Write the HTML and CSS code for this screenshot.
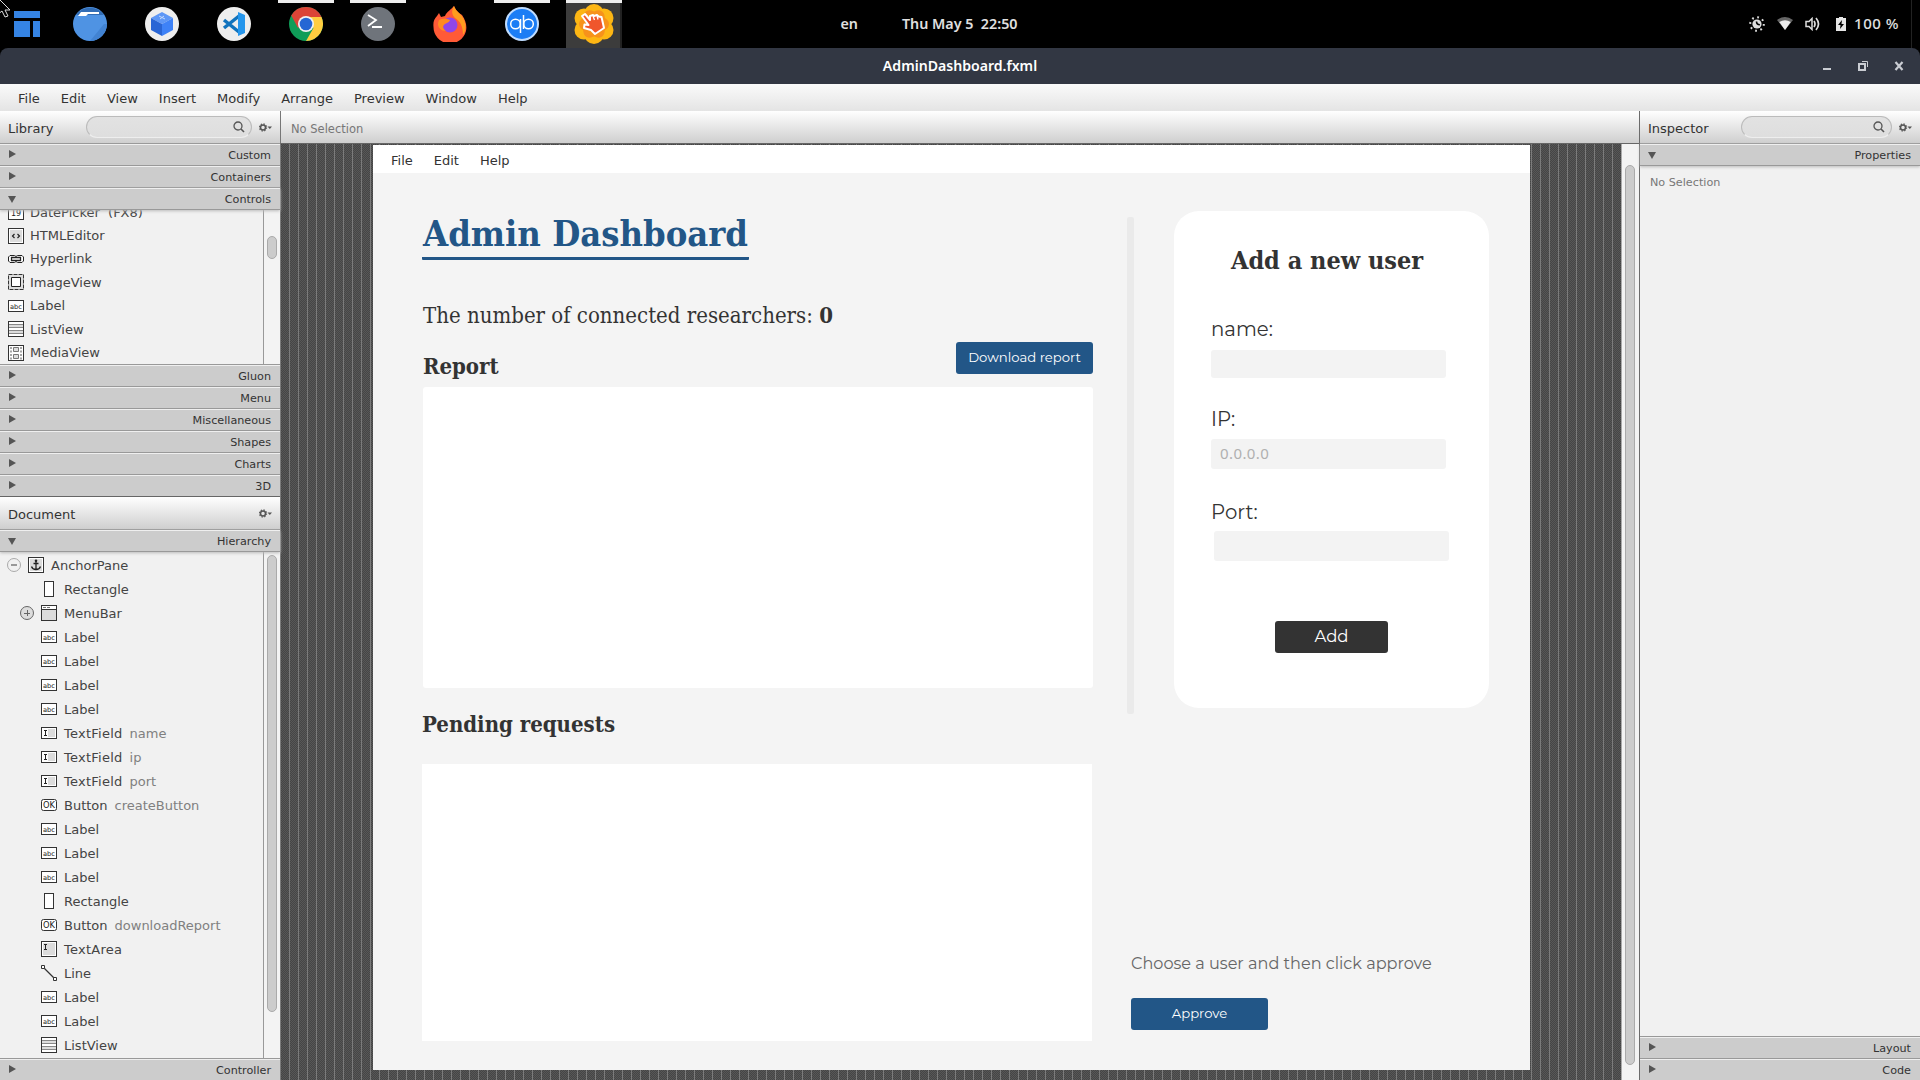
FILE: index.html
```html
<!DOCTYPE html>
<html lang="en">
<head>
<meta charset="utf-8">
<title>AdminDashboard.fxml</title>
<link rel="stylesheet" href="styles.css">
</head>
<body>
<svg class="defs" width="0" height="0">
  <symbol id="label" viewBox="0 0 16 16"><rect x=".5" y="2.5" width="15" height="11" fill="#fff" stroke="#333"/><text x="2" y="10.800" font-size="6.500" fill="#222" font-family="DejaVu Sans" textLength="12" lengthAdjust="spacingAndGlyphs">abc</text></symbol>
  <symbol id="textfield" viewBox="0 0 16 16"><rect x=".5" y="2.5" width="15" height="11" fill="#fff" stroke="#333"/><path fill="#dcdcdc" d="M7 4h7v8H7z"/><path d="M3 5.500h3M3 10.500h3M4.500 5v6" stroke="#222" fill="none"/></symbol>
  <symbol id="textarea" viewBox="0 0 16 16"><rect x=".5" y=".5" width="15" height="15" fill="#fff" stroke="#333"/><path fill="#dcdcdc" d="M2 2h12v12H2z"/><path d="M3 3.500h3M3 8.500h3M4.500 3v6" stroke="#222" fill="none"/></symbol>
  <symbol id="button" viewBox="0 0 16 16"><rect x=".5" y="2.500" width="15" height="11" rx="2" fill="#fff" stroke="#333"/><text x="2" y="11" font-size="8" fill="#222" font-family="DejaVu Sans" textLength="12" lengthAdjust="spacingAndGlyphs">OK</text></symbol>
  <symbol id="rect" viewBox="0 0 16 16"><rect x="3.500" y=".5" width="9" height="15" fill="#fff" stroke="#333"/></symbol>
  <symbol id="menubar" viewBox="0 0 16 16"><rect x=".5" y=".5" width="15" height="15" fill="#dcdcdc" stroke="#333"/><path fill="#fff" d="M1 1h14v3H1z"/><path d="M0 4.500h16" stroke="#333"/><path d="M2 2.500h3M6 2.500h3" stroke="#777"/></symbol>
  <symbol id="listview" viewBox="0 0 16 16"><rect x=".5" y=".5" width="15" height="15" fill="#fff" stroke="#333"/><path fill="#dcdcdc" d="M1 3h14v3H1zM1 9h14v3H1z"/><path d="M1 3.500h14M1 6.500h14M1 9.500h14M1 12.500h14" stroke="#888"/></symbol>
  <symbol id="line" viewBox="0 0 16 16"><path d="M3 3l10 10" stroke="#333" stroke-width="1.200"/><path d="M.5.5h3v3h-3zM12.500 12.500h3v3h-3z" fill="#fff" stroke="#333"/></symbol>
  <symbol id="anchor" viewBox="0 0 16 16"><rect x=".5" y=".5" width="15" height="15" fill="#fff" stroke="#333"/><path fill="#dcdcdc" d="M2 2h12v12H2z"/><path d="M8 4v8.500M5.500 6.500h5M3.500 9.500c.7 2.200 2.300 3 4.500 3s3.800-.8 4.500-3" stroke="#222" stroke-width="1.300" fill="none"/><circle cx="8" cy="3.800" r="1.300" fill="#222"/></symbol>
  <symbol id="date" viewBox="0 0 16 16"><rect x=".5" y=".5" width="15" height="15" fill="#fff" stroke="#333"/><path d="M1 2.500h14" stroke="#999" stroke-width="3"/><text x="3" y="12" font-size="8" fill="#222" font-family="DejaVu Sans">19</text></symbol>
  <symbol id="html" viewBox="0 0 16 16"><rect x=".5" y=".5" width="15" height="15" fill="#fff" stroke="#333"/><path fill="#dcdcdc" d="M2 2h12v12H2z"/><path d="M6.500 6L4.500 8l2 2M9.500 6l2 2-2 2" stroke="#222" stroke-width="1.200" fill="none"/></symbol>
  <symbol id="link" viewBox="0 0 16 16"><path d="M2 4.500h4.500L8 5.500l1.500-1H14L15.500 6v4L14 11.500H9.500L8 10.500l-1.500 1H2L.5 10V6z" fill="#fff" stroke="#222"/><path d="M3.500 6.500h9v3h-9z" fill="#fff" stroke="#222" stroke-width="1.300"/></symbol>
  <symbol id="image" viewBox="0 0 16 16"><path d="M1 1h14v14H1z" fill="#ddd"/><path d="M.5.5h15v15H.5z" fill="none" stroke="#333" stroke-dasharray="4 1"/><path d="M3.500 3.500h9v9h-9z" fill="#fff" stroke="#222"/></symbol>
  <symbol id="media" viewBox="0 0 16 16"><rect x=".5" y=".5" width="15" height="15" fill="#fff" stroke="#333"/><path d="M3 2v13M13 2v13" stroke="#888" stroke-width="1.500" stroke-dasharray="2 1.500"/><path d="M5.500 2.500h5v4h-5zM5.500 9.500h5v4h-5z" fill="#ddd" stroke="#777"/></symbol>
  <symbol id="search" viewBox="0 0 12 12"><circle cx="5" cy="5" r="4" fill="none" stroke="#555" stroke-width="1.300"/><path d="M8 8l3 3" stroke="#555" stroke-width="1.600"/></symbol>
  <symbol id="gear" viewBox="0 0 13 9"><circle cx="4" cy="4.500" r="3.500" fill="none" stroke="#666" stroke-width="1.400" stroke-dasharray="1.400 1.350"/><circle cx="4" cy="4.500" r="2.500" fill="none" stroke="#555" stroke-width="1.500"/><path d="M8.500 3.500H13L10.800 6z" fill="#555"/></symbol>
</svg>

<header class="taskbar">
  <nav class="apps">
    <span class="app"><svg width="28" height="28" viewBox="0 0 28 28"><path fill="#3584e4" d="M1 1h26v7H1zM1 11h16v16H1zM20 11h7v16h-7z"/></svg></span>
    <span class="app"><svg width="34" height="34" viewBox="0 0 34 34"><circle cx="17" cy="17" r="17" fill="#4f93e3"/><path fill="#326db5" d="M3 8a17 17 0 0 1 28 0z"/><path fill="#fff" d="M8 5h18v2H15l-2 2H5z"/><path fill="#4283d2" d="M31 17L17 34a17 17 0 0 0 17-17z"/></svg></span>
    <span class="app"><svg width="34" height="34" viewBox="0 0 34 34"><circle cx="17" cy="17" r="17" fill="#eee"/><path fill="#5e97f6" d="M17 5l11 6-11 6-11-6z"/><path fill="#2a66d5" d="M6 11l11 6v12L6 23z"/><path fill="#3e82f7" d="M28 11l-11 6v12l11-6z"/><path d="M14 9l6 3M15 12l4-3" stroke="#c5dafc"/></svg></span>
    <span class="app"><svg width="34" height="34" viewBox="0 0 34 34"><circle cx="17" cy="17" r="17" fill="#eee"/><path d="M22 9L7 21M7 13l15 12" stroke="#1173bd" stroke-width="3.500" fill="none"/><path fill="#2596ec" d="M21 5l7 3v18l-7 3z"/></svg></span>
    <span class="app run"><svg width="34" height="34" viewBox="0 0 34 34"><circle cx="17" cy="17" r="17" fill="#0f9d58"/><path fill="#db4437" d="M2.300 8.500a17 17 0 0 1 30.200 1.500H17l-8 11z"/><path fill="#ffcd40" d="M32.500 10A17 17 0 0 1 17 34l7.500-13L17 10z"/><circle cx="17" cy="17" r="8" fill="#f1f1f1"/><circle cx="17" cy="17" r="6.300" fill="#2566d4"/></svg></span>
    <span class="app run"><svg width="34" height="34" viewBox="0 0 34 34"><circle cx="17" cy="17" r="17" fill="#6f747b"/><path d="M7 8l8 5-8 6M11 20h10" stroke="#fff" stroke-width="1.800" fill="none"/></svg></span>
    <span class="app"><svg width="34" height="36" viewBox="0 0 34 36"><path fill="#ff5a36" d="M4 10l2-3 2 4 4-1c2-5 6-6 9-10 1 3 3 5 5 7l3 2c4 6 5 11 4 16A16.500 16.500 0 0 1 .5 21C0 16 1 13 4 10z"/><path fill="#ff9d1e" d="M21 0c1 3 3 5 5 7 8 7 8 17 4 22 0-9-3-14-8-17-3-3-4-7-1-12z"/><circle cx="17" cy="19" r="7.500" fill="#9046e8"/><path fill="#ff8b20" d="M6 14c4-2 8-1 11 0-1 3-4 3-5 4-3 2-2 5 1 7-6 0-10-5-7-11z"/></svg></span>
    <span class="app run"><svg width="34" height="34" viewBox="0 0 34 34"><circle cx="17" cy="17" r="16" fill="#1b7df5" stroke="#bfdcff" stroke-width="2"/><circle cx="10.500" cy="17" r="4.800" fill="none" stroke="#fff" stroke-width="1.500"/><circle cx="23.500" cy="17" r="4.800" fill="none" stroke="#fff" stroke-width="1.500"/><path d="M15.500 12v14M18.500 8v14" stroke="#fff" stroke-width="1.500"/></svg></span>
    <span class="app run active"><svg width="40" height="40" viewBox="0 0 40 40"><g fill="#fdb614"><circle cx="20" cy="10" r="10"/><circle cx="20" cy="30" r="10"/><circle cx="10" cy="14" r="9.500"/><circle cx="30" cy="14" r="9.500"/><circle cx="10" cy="26" r="9.500"/><circle cx="30" cy="26" r="9.500"/></g><g fill="#f47b20" opacity=".6"><ellipse cx="20" cy="20" rx="15" ry="9"/><ellipse cx="20" cy="20" rx="15" ry="9" transform="rotate(60 20 20)"/><ellipse cx="20" cy="20" rx="15" ry="9" transform="rotate(120 20 20)"/></g><path d="M8 12l3-2 5 6v-4l3-1 1 1 3-1 1.500 1.500 3 .5L30 24l-9 6-4-4-7-2 .5-3.500 4 .5z" fill="#f0562c" stroke="#fff" stroke-width="2" stroke-linejoin="round"/><path d="M19 12l1.500 4M23 11.500l1 4" stroke="#fff" stroke-width="1.300"/></svg></span>
  </nav>
  <div class="clock"><span>en</span><span>Thu May 5&nbsp; 22:50</span></div>
  <div class="tray">
    <svg width="16" height="16" viewBox="0 0 16 16"><circle cx="8" cy="8" r="6.800" fill="none" stroke="#ddd" stroke-width="2" stroke-dasharray="1.800 3.540"/><circle cx="8" cy="8" r="4.600" fill="#ddd"/><path d="M7.500 5.500c0 2 1 3.200 3.400 3.200" fill="none" stroke="#000" stroke-width="1.600"/></svg>
    <svg width="16" height="13" viewBox="0 0 16 13"><path fill="#666" d="M0 3Q8-3 16 3L8 13z"/><path fill="#eee" d="M2.300 5Q8 1.500 13.700 5L8 13z"/></svg>
    <svg width="16" height="14" viewBox="0 0 16 14"><path d="M1 4.500h3L7 1.500v11l-3-3H1z" fill="none" stroke="#ddd" stroke-width="1.500"/><path d="M9 4q2 3 0 6M11 1q5 6 0 12" fill="none" stroke="#ddd" stroke-width="1.700"/></svg>
    <svg class="battery" width="10" height="14" viewBox="0 0 10 14"><path fill="#e6e6e6" d="M3 0h4v1h3v13H0V1h3z"/><path d="M6 3L2 8h2.500L4 12l4-5H5.500z"/></svg>
    <span>100 %</span>
  </div>
  <svg class="cursor" width="13" height="18" viewBox="0 0 13 18"><path d="M-3-3L10 10H5l3 6-3 1-3-6-5 4z" fill="#000" stroke="#ddd"/></svg>
</header>

<div class="titlebar">
  <span class="title">AdminDashboard.fxml</span>
  <svg width="82" height="12" viewBox="0 0 82 12" fill="none" stroke="#c9ccd2"><path d="M1 9h8" stroke-width="2"/><path d="M37 4h6v6h-6z" stroke-width="2"/><path d="M40 1.500h5.500V7"/><path d="M73.500 2l7 8M80.500 2l-7 8" stroke-width="2.200"/></svg>
</div>

<nav class="menu"><span>File</span><span>Edit</span><span>View</span><span>Insert</span><span>Modify</span><span>Arrange</span><span>Preview</span><span>Window</span><span>Help</span></nav>

<main class="workspace">
  <aside class="side left">
    <div class="bar"><b>Library</b><div class="search"><svg width="12" height="12"><use href="#search"/></svg></div><svg width="13" height="9"><use href="#gear"/></svg></div>
    <div class="sec">Custom</div>
    <div class="sec">Containers</div>
    <div class="sec open">Controls</div>
    <div class="list library">
      <div class="rows">
        <div><svg><use href="#date"/></svg>DatePicker&nbsp; (FX8)</div>
        <div><svg><use href="#html"/></svg>HTMLEditor</div>
        <div><svg><use href="#link"/></svg>Hyperlink</div>
        <div><svg><use href="#image"/></svg>ImageView</div>
        <div><svg><use href="#label"/></svg>Label</div>
        <div><svg><use href="#listview"/></svg>ListView</div>
        <div><svg><use href="#media"/></svg>MediaView</div>
      </div>
      <div class="track"><i class="thumb"></i></div>
    </div>
    <div class="sec top">Gluon</div>
    <div class="sec">Menu</div>
    <div class="sec">Miscellaneous</div>
    <div class="sec">Shapes</div>
    <div class="sec">Charts</div>
    <div class="sec last">3D</div>
    <div class="bar doc"><b>Document</b><svg width="13" height="9"><use href="#gear"/></svg></div>
    <div class="sec open">Hierarchy</div>
    <div class="list hierarchy">
      <div class="rows">
        <div class="root"><em class="tog minus"></em><svg><use href="#anchor"/></svg>AnchorPane</div>
        <div><svg><use href="#rect"/></svg>Rectangle</div>
        <div class="expand"><em class="tog"></em><svg><use href="#menubar"/></svg>MenuBar</div>
        <div><svg><use href="#label"/></svg>Label</div>
        <div><svg><use href="#label"/></svg>Label</div>
        <div><svg><use href="#label"/></svg>Label</div>
        <div><svg><use href="#label"/></svg>Label</div>
        <div><svg><use href="#textfield"/></svg><span class="wide">TextField</span><s>name</s></div>
        <div><svg><use href="#textfield"/></svg><span class="wide">TextField</span><s>ip</s></div>
        <div><svg><use href="#textfield"/></svg><span class="wide">TextField</span><s>port</s></div>
        <div><svg><use href="#button"/></svg>Button<s>createButton</s></div>
        <div><svg><use href="#label"/></svg>Label</div>
        <div><svg><use href="#label"/></svg>Label</div>
        <div><svg><use href="#label"/></svg>Label</div>
        <div><svg><use href="#rect"/></svg>Rectangle</div>
        <div><svg><use href="#button"/></svg>Button<s>downloadReport</s></div>
        <div><svg><use href="#textarea"/></svg><span class="wide">TextArea</span></div>
        <div><svg><use href="#line"/></svg>Line</div>
        <div><svg><use href="#label"/></svg>Label</div>
        <div><svg><use href="#label"/></svg>Label</div>
        <div><svg><use href="#listview"/></svg>ListView</div>
      </div>
      <div class="track"><i class="thumb"></i></div>
    </div>
    <div class="sec top end">Controller</div>
  </aside>

  <section class="center">
    <div class="bar path">No Selection</div>
    <div class="canvas">
      <div class="stage">
        <nav class="stage-menu"><span>File</span><span>Edit</span><span>Help</span></nav>
        <div class="form">
          <div class="col-main">
            <h1>Admin Dashboard</h1>
            <p class="count">The number of connected researchers: <strong>0</strong></p>
            <div class="report-head"><h2>Report</h2><button class="blue">Download report</button></div>
            <div class="area"></div>
            <h2 class="pending-head">Pending requests</h2>
            <div class="pending"></div>
          </div>
          <div class="col-side">
            <div class="upper">
              <div class="divider"></div>
              <div class="card">
                <h3>Add a new user</h3>
                <label>name:</label><div class="field short"></div>
                <label class="ip">IP:</label><div class="field">0.0.0.0</div>
                <label class="port">Port:</label><div class="field shifted"></div>
                <button class="dark">Add</button>
              </div>
            </div>
            <p class="hint">Choose a user and then click approve</p>
            <button class="blue approve">Approve</button>
          </div>
        </div>
      </div>
      <div class="track"><i class="thumb"></i></div>
    </div>
  </section>

  <aside class="side right">
    <div class="bar"><b>Inspector</b><div class="search"><svg width="12" height="12"><use href="#search"/></svg></div><svg width="13" height="9"><use href="#gear"/></svg></div>
    <div class="sec open">Properties</div>
    <div class="props">No Selection</div>
    <div class="sec top">Layout</div>
    <div class="sec end">Code</div>
  </aside>
</main>
</body>
</html>
```
FILE: styles.css
```css
* { box-sizing: border-box; }
body { margin: 0; width: 1920px; height: 1080px; overflow: hidden; background: #000; font-family: "DejaVu Sans", sans-serif; font-size: 13px; color: #333; display: flex; flex-direction: column; }
h1, h2, h3, p { margin: 0; }
svg { display: block; flex: none; }
.defs { display: none; }

.taskbar { position: relative; height: 48px; flex: none; display: grid; grid-template-columns: 1fr auto 1fr; color: #e0e0e0; font: 600 14.300px "Noto Sans", sans-serif; }
.apps { display: flex; }
.app { width: 56px; height: 48px; margin-right: 16px; display: flex; align-items: center; justify-content: center; border-top: 3px solid transparent; padding-bottom: 3px; }
.app:first-child { width: 54px; margin-right: 8px; }
.app.run { border-color: #eee; }
.app.active { background: #3c3c3c; box-shadow: inset -2px 0 #222; margin-right: 0; }
.clock { display: flex; gap: 44px; align-items: center; transform: translateX(-31px); padding-bottom: 1px; }
.tray { display: flex; justify-content: flex-end; align-items: center; padding: 0 12px 1px 0; margin-right: 8px; border-right: 1px solid #222; font-weight: 500; font-size: 15px; letter-spacing: .5px; }
.tray svg { margin-right: 12px; }
.tray .battery { margin: 0 8px 0 3px; }
.tray span { padding-bottom: 2px; }
.cursor { position: absolute; left: 0; top: 0; }

.titlebar { height: 36px; flex: none; background: #323743; border-radius: 8px 8px 0 0; display: grid; grid-template-columns: 1fr auto 1fr; align-items: center; color: #fff; font: 600 14.100px "Noto Sans", sans-serif; }
.title { grid-column: 2; padding-bottom: 2px; }
.titlebar svg { justify-self: end; margin-right: 16px; }

.menu { height: 27px; flex: none; background: linear-gradient(#fafafa, #e4e4e4); display: flex; gap: 21px; padding-left: 18px; line-height: 29px; }

.workspace { flex: 1; min-height: 0; display: grid; grid-template-columns: 280px 1fr 281px; background: #f1f1f1; }
.side { display: flex; flex-direction: column; min-height: 0; }
.right { border-left: 1px solid #6b6b6b; }
.bar { height: 33px; flex: none; background: linear-gradient(#fff, #cfcfcf); border-bottom: 1px solid #999; display: flex; align-items: center; padding: 0 8px; }
.bar b { font-weight: 400; flex: 1; padding-top: 2px; }
.search { width: 166px; height: 22px; margin-right: 7px; border: 1px solid #bbb; border-bottom-color: #eee; border-radius: 11px; background: linear-gradient(#e2e2e2, #dedede); display: flex; align-items: center; justify-content: flex-end; padding-right: 6px; }
.right .search { width: 151px; }
.sec { height: 22px; flex: none; position: relative; background: #ccc; border-top: 1px solid #efefef; border-bottom: 1px solid #999; text-align: right; padding-right: 9px; font-size: 11.200px; line-height: 22px; z-index: 1; }
.sec::before { content: ""; position: absolute; left: 9px; top: 5px; border-left: 7px solid #555; border-top: 4px solid transparent; border-bottom: 4px solid transparent; }
.sec.open { box-shadow: 0 1px 3px #bbb; }
.sec.open::before { left: 8px; top: 7px; border-top: 7px solid #555; border-left: 4px solid transparent; border-right: 4px solid transparent; border-bottom: 0; }
.sec.top { height: 23px; border-top: 1px solid #999; box-shadow: inset 0 1px #efefef; }
.sec.top::before { top: 6px; }
.sec.top { line-height: 24px; }
.sec.end { border-bottom: 0; height: 21px; }
.sec.top.end { height: 22px; }
.sec.last { border-bottom-color: #666; }

.list { display: flex; overflow: hidden; color: #444; }
.library { height: 154px; flex: none; }
.hierarchy { flex: 1; min-height: 0; }
.rows { flex: 1; }
.rows div { display: flex; align-items: center; padding-left: 41px; height: 24px; white-space: nowrap; }
.rows svg { width: 16px; height: 16px; margin-right: 7px; }
.rows s { text-decoration: none; color: #808080; margin-left: 7px; }
.wide { letter-spacing: .25px; }
.library .rows { margin-top: -9.500px; }
.library .rows div { padding-left: 8px; height: 23.400px; }
.library .rows svg { margin-right: 6px; }
.hierarchy .rows { padding-top: 1px; }
.rows .root { padding-left: 7px; }
.rows .expand { padding-left: 20px; }
.tog { width: 14px; height: 14px; border: 1px solid #666; border-radius: 50%; margin-right: 7px; background: linear-gradient(#666, #666) 50% 50% / 6px 1px no-repeat, linear-gradient(#666, #666) 50% 50% / 1px 6px no-repeat, #ddd; }
.tog.minus { border-color: #aaa; background: linear-gradient(#999, #999) 50% 50% / 6px 2px no-repeat, #f1f1f1; }
.track { width: 17px; border-left: 1px solid #999; padding: 3px 3px 0; background: #f3f3f3; }
.thumb { display: block; width: 10px; border: 1px solid #aaa; border-radius: 5px; background: #ccc; }
.library .thumb { height: 23px; margin-top: 23px; }
.hierarchy .thumb { height: 457px; }

.center { display: flex; flex-direction: column; min-height: 0; min-width: 0; }
.path { border-left: 1px solid #777; border-bottom-color: #666; padding: 3px 0 0 10px; font-size: 11.500px; color: #777; }
.canvas { flex: 1; min-height: 0; display: flex; justify-content: space-between; padding: 1px 0 0 93px; background: linear-gradient(90deg, #7b7b7b 1px, transparent 1px) 0 0 / 9px 9px, repeating-conic-gradient(#454545 0 25%, #575757 0 50%) 0 0 / 2px 2px; }
.canvas .track { margin-top: -1px; width: 18px; padding-top: 21px; border-left-color: #aaa; }
.canvas .thumb { height: 900px; }
.stage { width: 1157px; height: 925px; background: #f4f4f4; }
.stage-menu { height: 28px; background: #fff; display: flex; gap: 21px; padding-left: 18px; line-height: 31px; }
.form { display: flex; padding-left: 49px; gap: 34px; }
.col-main { width: 671px; }
h1, h2, h3, .count { font-family: "DejaVu Serif Condensed", "DejaVu Serif", serif; font-stretch: condensed; white-space: nowrap; }
h1 { width: 327px; margin-top: 38px; height: 49px; padding-left: 1px; border-bottom: 3px solid #225687; border-radius: 1px; color: #225687; font-size: 36px; line-height: 44px; }
.count { margin-top: 40px; padding-left: 1px; font-size: 22px; line-height: 30px; }
.report-head { display: flex; justify-content: space-between; margin-top: 11px; height: 45px; }
h2 { font-size: 22px; line-height: 28px; }
.report-head h2 { margin-top: 10px; padding-left: 1px; }
button { font-family: Montserrat, Inter, sans-serif; font-size: 13.200px; border: 0; border-radius: 3px; color: #fff; height: 32px; padding: 0 0 2px; }
.blue { background: #225687; width: 137px; }
.area { height: 301px; margin-left: 1px; background: #fff; border-radius: 3px; }
.pending-head { margin-top: 22px; }
.pending { width: 670px; height: 277px; margin-top: 26px; background: #fff; }
.col-side { padding-top: 38px; }
.upper { display: flex; }
.divider { width: 7px; height: 497px; margin-top: 6px; background: #eaeaea; border-radius: 2px; }
.card { width: 315px; height: 497px; margin-left: 40px; background: #fff; border-radius: 25px; padding: 34px 0 0 37px; font-family: Montserrat, Inter, sans-serif; }
h3 { width: 232px; text-align: center; font-size: 25px; line-height: 32px; }
label { display: block; font-size: 19.700px; line-height: 24px; margin-top: 40px; }
.field { width: 235px; height: 30px; margin-top: 9px; padding-left: 9px; background: #f3f3f3; border-radius: 3px; color: #b0b0b0; font: 15px/28px "Noto Sans", sans-serif; letter-spacing: .4px; }
.short { height: 28px; }
.ip { margin: 29px 0 -1px; }
.port { margin: 31px 0 -2px; }
.shifted { margin-left: 3px; }
.dark { display: block; background: #333; width: 113px; margin: 60px 0 0 64px; font-size: 16.500px; }
.hint { margin: 237px 0 0 4px; font: 16.100px/24px Montserrat, Inter, sans-serif; color: #666; white-space: nowrap; }
.approve { margin: 23px 0 0 4px; }
.props { flex: 1; padding: 10px 0 0 10px; font-size: 11.200px; color: #777; }
```
